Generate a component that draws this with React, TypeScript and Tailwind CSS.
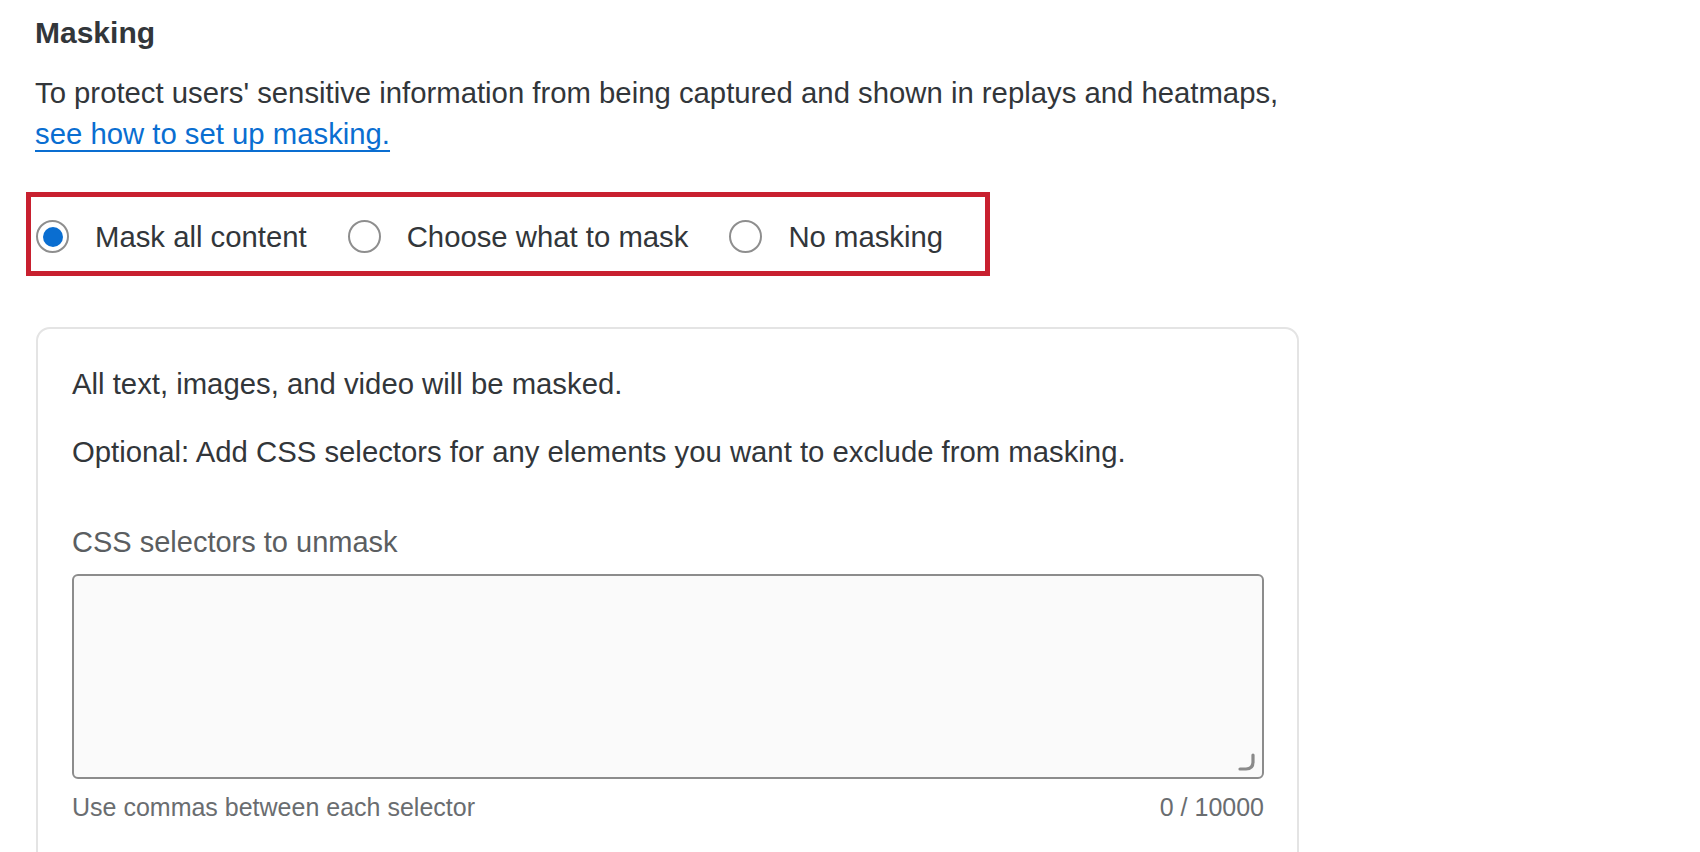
import React from "react";

function Radio({ checked, label }: { checked?: boolean; label: string }) {
  return (
    <div className="flex items-center mr-[41px] last:mr-0">
      <span className="flex h-[33px] w-[33px] shrink-0 items-center justify-center rounded-full border-2 border-[#8e8e8e] bg-white">
        {checked ? <span className="block h-[20px] w-[20px] rounded-full bg-[#0a6ed1]" /> : null}
      </span>
      <span className="ml-[26px] whitespace-nowrap text-[29.3px] leading-[40px] text-[#32363a]">{label}</span>
    </div>
  );
}

export default function App() {
  return (
    <div className="h-[852px] w-[1700px] overflow-hidden bg-white px-[35px] pt-[13px] font-['Liberation_Sans',Arial,sans-serif] text-[#32363a]">
      <h2 className="text-[30px] font-bold leading-[40px] text-[#32363a]">Masking</h2>
      <p className="mt-[19px] whitespace-nowrap text-[29.3px] leading-[41px]">
        To protect users' sensitive information from being captured and shown in replays and heatmaps,
        <br />
        <a
          href="#"
          className="text-[#0a6ed1] underline decoration-[2px] underline-offset-[6px]"
        >
          see how to set up masking.
        </a>
      </p>

      <div className="-ml-[9px] mt-[38px] box-border flex h-[84px] w-[964px] items-center border-[5px] border-[#c8202f] pl-[5px] pt-[5px]">
        <Radio checked label="Mask all content" />
        <Radio label="Choose what to mask" />
        <Radio label="No masking" />
      </div>

      <div className="ml-[1px] mt-[51px] box-border w-[1263px] rounded-[14px] border-2 border-[#e4e4e4] pb-[40px] pl-[34px] pr-[33px] pt-[34px]">
        <p className="text-[29.3px] leading-[41px] text-[#32363a]">All text, images, and video will be masked.</p>
        <p className="mt-[27px] text-[29.3px] leading-[41px] text-[#32363a]">
          Optional: Add CSS selectors for any elements you want to exclude from masking.
        </p>
        <div className="mt-[50px] text-[29px] leading-[41px] text-[#5b5e61]">CSS selectors to unmask</div>
        <div className="relative mt-[11px] h-[205px]">
          <textarea className="block h-full w-full resize-none rounded-[6px] border-2 border-[#8c8c8c] bg-[#fafafa] outline-none" />
          <svg
            className="pointer-events-none absolute bottom-[7px] right-[8px]"
            width="20"
            height="20"
            viewBox="0 0 20 20"
            fill="none"
          >
            <path d="M17 3 V10 Q17 17 10 17 H4" stroke="#8a8a8a" strokeWidth="3.2" strokeLinecap="round" fill="none" />
          </svg>
        </div>
        <div className="mt-[11px] flex justify-between text-[25px] leading-[34px] text-[#6a6d70]">
          <span>Use commas between each selector</span>
          <span>0 / 10000</span>
        </div>
      </div>
    </div>
  );
}
